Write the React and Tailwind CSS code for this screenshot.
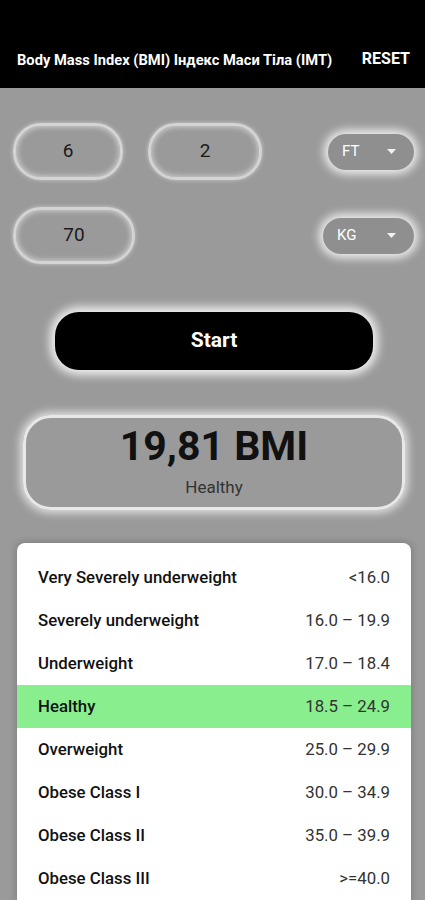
import { useState } from "react";

const ranges = [
  ["Very Severely underweight", "<16.0"],
  ["Severely underweight", "16.0 – 19.9"],
  ["Underweight", "17.0 – 18.4"],
  ["Healthy", "18.5 – 24.9"],
  ["Overweight", "25.0 – 29.9"],
  ["Obese Class I", "30.0 – 34.9"],
  ["Obese Class II", "35.0 – 39.9"],
  ["Obese Class III", ">=40.0"],
];

function Field({ value, className }) {
  return (
    <div
      className={
        "h-[57px] rounded-[28px] border-[3px] border-[#d4d4d4] shadow-[inset_0_0_6px_rgba(255,255,255,0.7),0_0_4px_rgba(255,255,255,0.5)] flex items-center justify-center text-[19px] text-[#1a1a1a] " +
        className
      }
    >
      {value}
    </div>
  );
}

function Unit({ label, className }) {
  return (
    <div
      className={
        "h-[36px] rounded-full bg-[#8f8f8f] shadow-[0_0_10px_4px_rgba(255,255,255,0.85)] flex items-center justify-between pl-[14px] pr-[18px] text-[15px] text-white " +
        className
      }
    >
      <span>{label}</span>
      <svg width="9" height="5" viewBox="0 0 9 5">
        <path d="M0 0h9L4.5 5z" fill="#f2f2f2" />
      </svg>
    </div>
  );
}

export default function App() {
  const [selected] = useState("Healthy");

  return (
    <div className="w-[425px] h-[900px] overflow-hidden bg-[#9a9a9a] font-['Roboto','Liberation_Sans',sans-serif]">
      <div className="h-[88px] bg-black flex items-end justify-between pb-[17px] pl-[17px] pr-[15px]">
        <span className="text-[14.7px] font-bold text-white">
          Body Mass Index (BMI) Індекс Маси Тіла (ІМТ)
        </span>
        <span className="text-[16px] font-bold text-white">RESET</span>
      </div>

      <div className="flex items-center mt-[35px] pl-[13px] pr-[11px]">
        <Field value="6" className="w-[110px]" />
        <Field value="2" className="w-[114px] ml-[25px]" />
        <Unit label="FT" className="w-[86px] ml-auto" />
      </div>

      <div className="flex items-center mt-[27px] pl-[13px] pr-[11px]">
        <Field value="70" className="w-[122px]" />
        <Unit label="KG" className="w-[91px] ml-auto" />
      </div>

      <div className="flex mt-[48px] pl-[55px]">
        <button className="w-[318px] h-[58px] rounded-[24px] bg-black text-white text-[21px] font-bold shadow-[0_0_10px_5px_rgba(255,255,255,0.85)]">
          Start
        </button>
      </div>

      <div className="ml-[23px] mr-[20px] mt-[45px] h-[95px] rounded-[28px] border-[3px] border-[#e8e8e8] shadow-[0_0_8px_3px_rgba(255,255,255,0.7)] flex flex-col items-center justify-center">
        <div className="text-[41px] font-bold text-[#111] leading-none mt-[2px]">19,81 BMI</div>
        <div className="text-[17px] text-[#333] mt-[8px]">Healthy</div>
      </div>

      <div className="ml-[17px] mr-[14px] mt-[33px] bg-white rounded-t-[8px] shadow-[0_0_6px_2px_rgba(0,0,0,0.15)] pt-[13px]">
        {ranges.map(([name, range]) => (
          <div
            key={name}
            className={
              "h-[43px] flex items-center justify-between pl-[21px] pr-[21px] text-[16.8px] " +
              (name === selected ? "bg-[#88ee8e]" : "")
            }
          >
            <span className="font-medium text-[#111]">{name}</span>
            <span className="text-[#333]">{range}</span>
          </div>
        ))}
      </div>
    </div>
  );
}
